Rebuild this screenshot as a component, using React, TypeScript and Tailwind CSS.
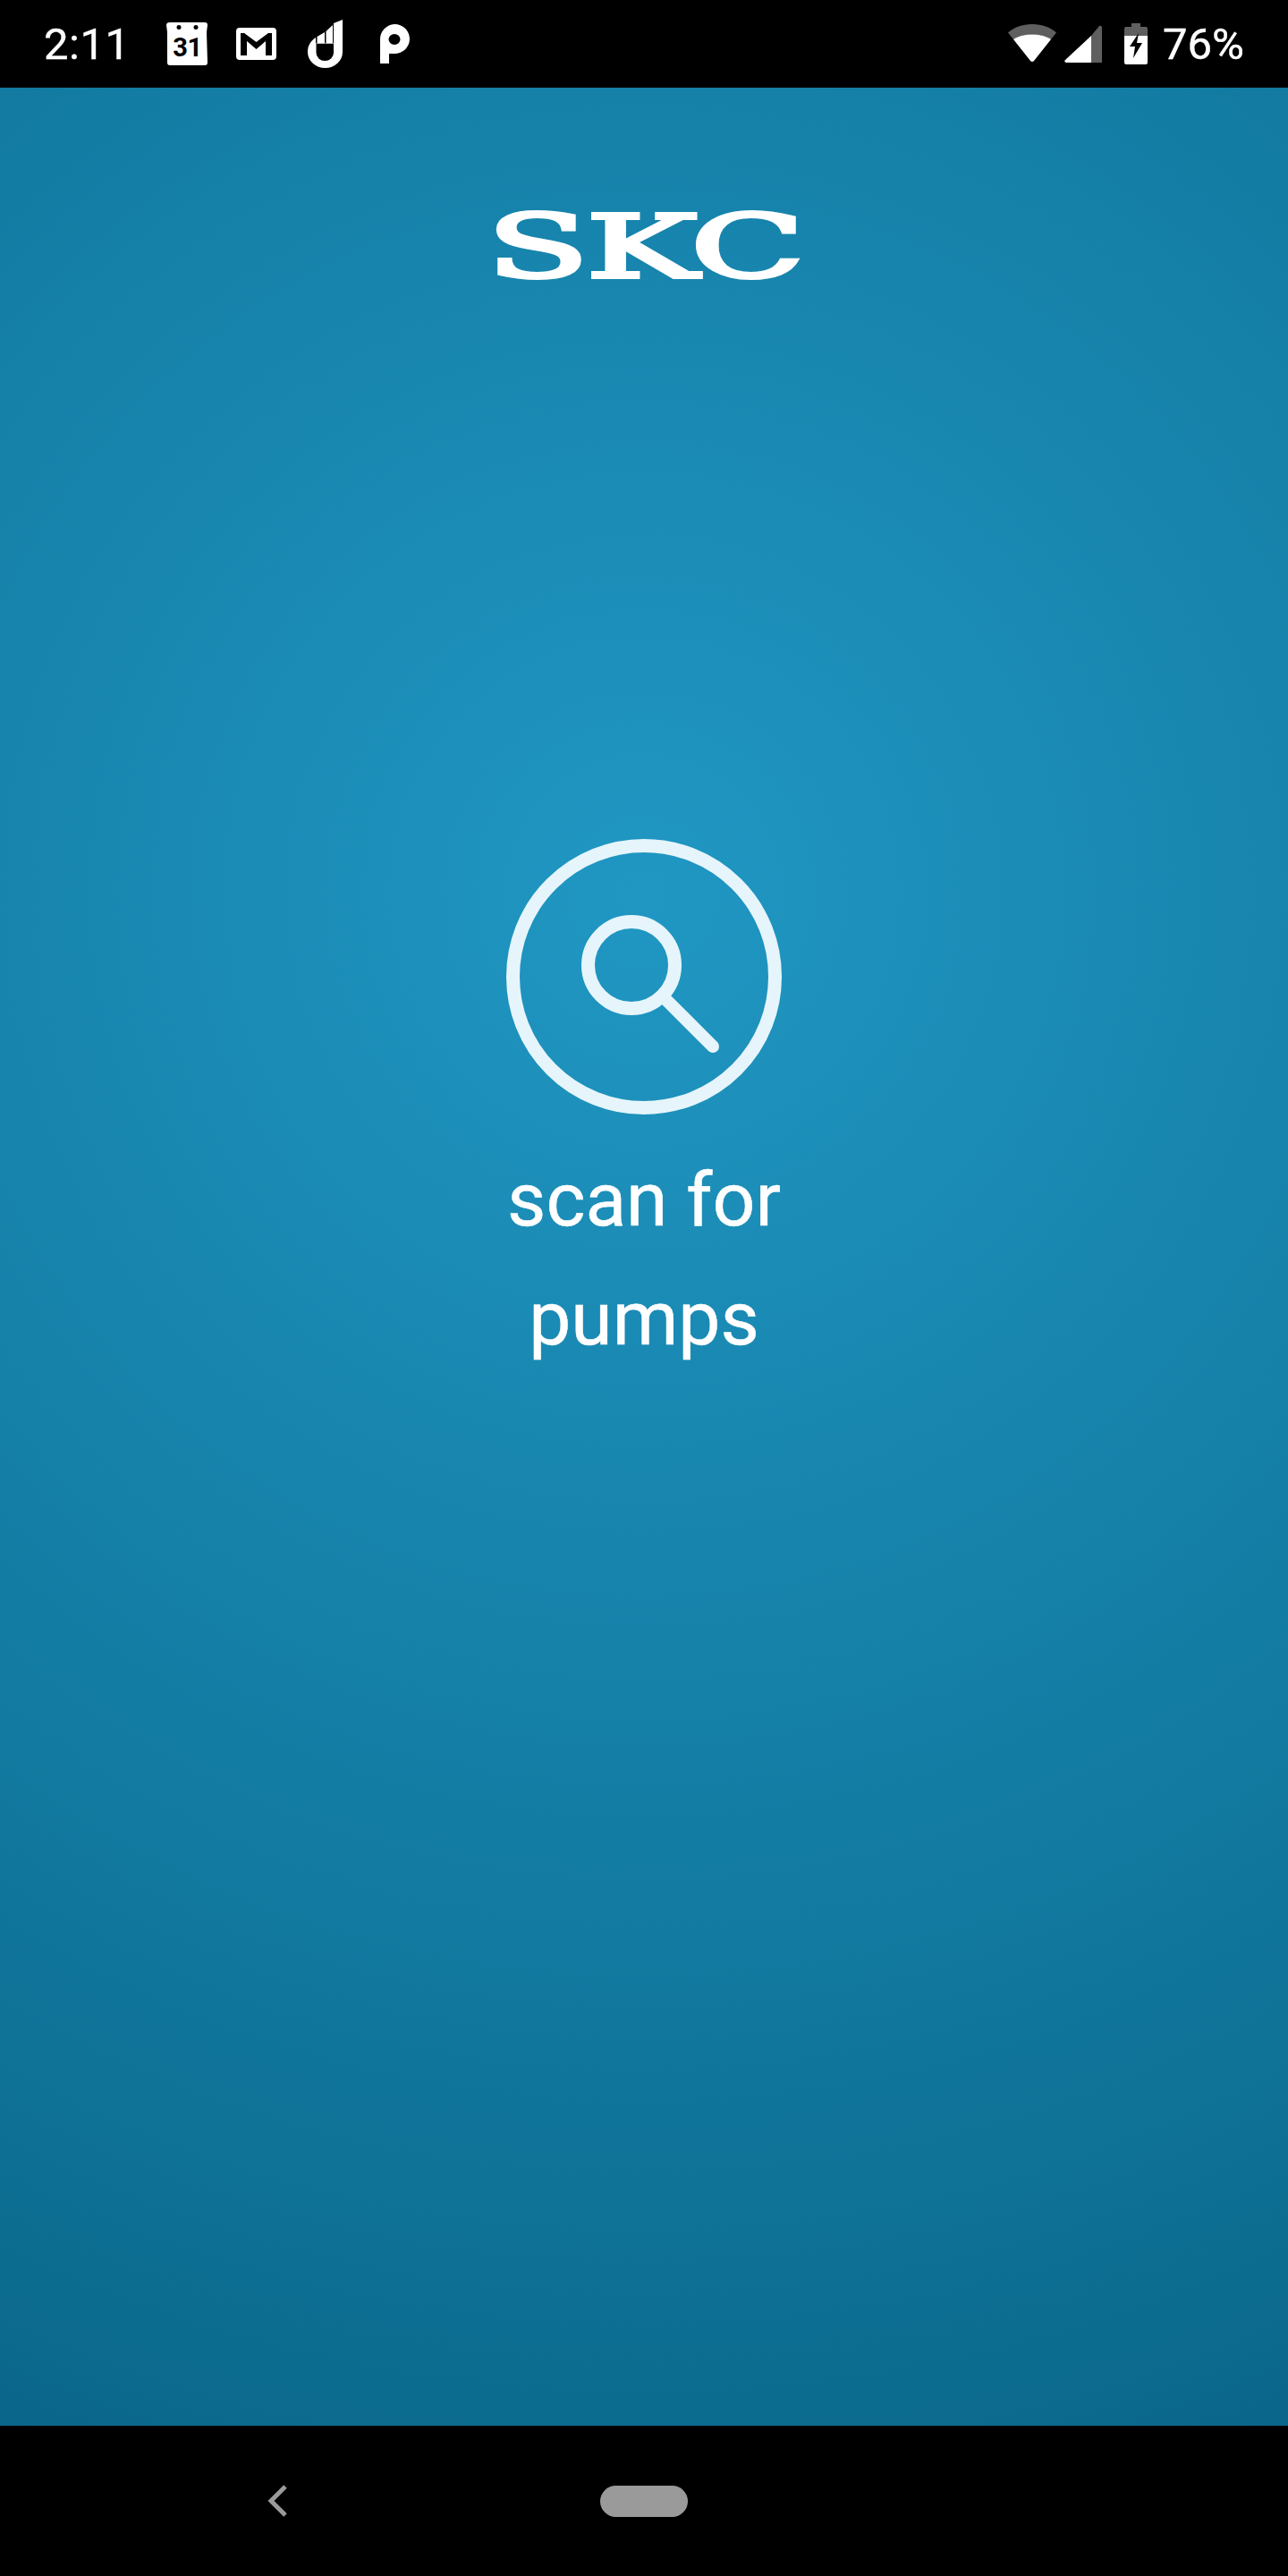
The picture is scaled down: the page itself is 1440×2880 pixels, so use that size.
export default function App() {
  return (
    <div className="w-[1440px] h-[2880px] flex flex-col bg-black font-['Roboto',sans-serif] overflow-hidden">
      <div className="h-[98px] shrink-0 flex items-center justify-between bg-black text-white text-[49px] leading-none pl-[49px] pr-[49px] [-webkit-text-stroke:0.4px_white]">
        <div className="flex items-center">
          <span className="w-[137px] tracking-[0.5px]">2:11</span>
          <div className="relative w-[47px] h-[50px]">
            <svg viewBox="0 0 47 50" className="w-[47px] h-[50px]">
              <path fill="#fff" fillRule="evenodd" d="M4 1H43Q46 1 46 4L45 12 46 46Q46 49 43 49H4Q1 49 1 46V12L0 4Q0 1 4 1ZM14 4A2.500 2.500 0 1 0 14 9 2.500 2.500 0 0 0 14 4ZM33 4A2.500 2.500 0 1 0 33 9 2.500 2.500 0 0 0 33 4Z" />
            </svg>
            <span className="absolute left-0 right-0 top-[15px] text-center text-[29px] leading-[29px] font-bold text-black tracking-[-0.5px] [-webkit-text-stroke:0px_black]">31</span>
          </div>
          <svg viewBox="0 0 45 36" className="w-[45px] h-[36px] ml-[31px]">
            <path fill="#fff" fillRule="evenodd" d="M4 0H41Q45 0 45 4V32Q45 36 41 36H4Q0 36 0 32V4Q0 0 4 0ZM5 6V31H12V15L22.500 24 33 15V31H40V6H36L22.500 16 9 6Z" />
          </svg>
          <svg viewBox="0 0 40 54" className="w-[40px] h-[54px] ml-[35px]">
            <path fill="#fff" fillRule="evenodd" d="M9 20V26.500H29V4L39 0V36A19.500 18 0 0 1 0 36C0 29 3 24 9 20ZM9.500 27V37A9.700 9 0 0 0 29 37V27Z" />
            <path fill="#fff" d="M10.500 19L19 14V26.500H10.500ZM20.500 13L28 6V26.500H20.500Z" />
          </svg>
          <svg viewBox="0 0 34 44" className="w-[34px] h-[44px] ml-[40px]">
            <path fill="#fff" fillRule="evenodd" d="M17 0A17 16.500 0 0 1 17 33H11V44H1V17A17 17 0 0 1 17 0ZM17 11A6.500 6 0 1 0 17 23 6.500 6 0 0 0 17 11Z" />
          </svg>
        </div>
        <div className="flex items-center">
          <svg viewBox="0 0 54 44" className="w-[54px] h-[44px]">
            <path fill="#5f5f5f" d="M27 0C38 0 47 3.500 54 9.500L48 17C42 13 35 11.500 27 11.500S12 13 6 17L0 9.500C7 3.500 16 0 27 0Z" />
            <path fill="#fff" d="M27 11.500C35 11.500 42 13 48 17L29 41Q27 43 25 41L6 17C12 13 19 11.500 27 11.500Z" />
          </svg>
          <svg viewBox="0 0 42 42" className="w-[42px] h-[42px] ml-[9px]">
            <path fill="#5f5f5f" d="M30 12L39 1Q42 0 42 3V42H30Z" />
            <path fill="#fff" d="M30 12V42H2Q-1 41 1 39Z" />
          </svg>
          <svg viewBox="0 0 26 46" className="w-[26px] h-[46px] ml-[25px]">
            <path fill="#5f5f5f" d="M8 0H18V4H24Q26 4 26 6V14H0V6Q0 4 2 4H8Z" />
            <path fill="#fff" d="M0 14H26V44Q26 46 24 46H2Q0 46 0 44Z" />
            <path fill="#000" d="M16 11L6 26H12L10 39 20 22H14Z" />
          </svg>
          <span className="ml-[17px]">76%</span>
        </div>
      </div>

      <div className="h-[2614px] shrink-0 flex flex-col items-center bg-[radial-gradient(circle_1850px_at_720px_900px,#2097c3_0%,#1580a8_49%,#0c6c90_92%,#0a668a_100%)]">
        <div className="mt-[124px] h-[110px] flex items-center justify-center w-[340px]">
          <span className="font-['DejaVu_Serif',serif] font-normal text-white text-[97px] leading-[110px] tracking-[-2px] scale-x-[1.72] [-webkit-text-stroke:4px_white]">SKC</span>
        </div>
        <svg viewBox="0 0 308 308" className="w-[308px] h-[308px] mt-[606px]">
          <g fill="none" stroke="#e6f5fb" strokeWidth="15">
            <circle cx="154" cy="154" r="146.500" />
            <circle cx="140" cy="141" r="48.500" />
            <path d="M178 179L231 232" strokeWidth="14" strokeLinecap="round" />
          </g>
        </svg>
        <div className="mt-[29px] w-[340px] text-center text-white font-['Roboto',sans-serif] text-[84px] leading-[133px] [-webkit-text-stroke:0.5px_white]">scan for pumps</div>
      </div>

      <div className="h-[168px] shrink-0 bg-black relative flex items-center justify-center">
        <svg viewBox="0 0 24 36" className="absolute left-[299px] top-[66px] w-[24px] h-[36px]">
          <path d="M20 2L4 18 20 34" fill="none" stroke="#9a9a9a" strokeWidth="5" />
        </svg>
        <div className="w-[98px] h-[35px] rounded-full bg-[#9a9a9a]" />
      </div>
    </div>
  );
}
